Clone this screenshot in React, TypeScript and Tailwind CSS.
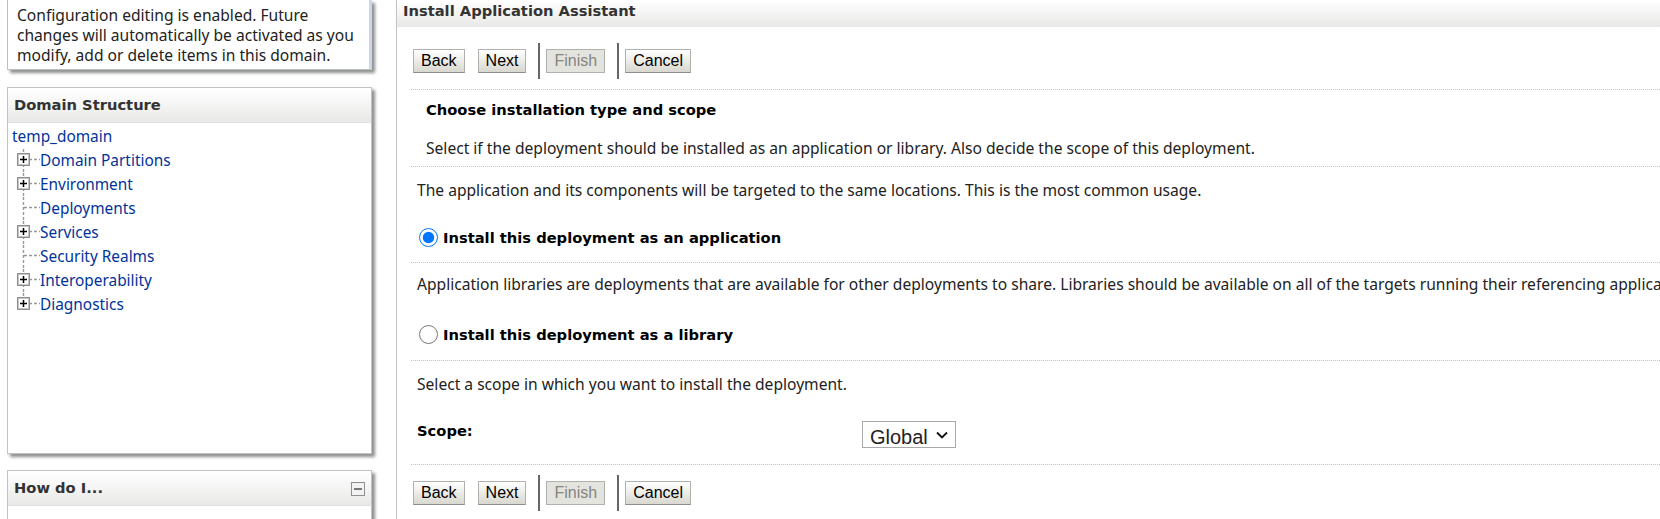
const bodyFont = "font-['Noto_Sans','DejaVu_Sans',sans-serif]";
const boldFont = "font-['DejaVu_Sans',sans-serif] font-bold";

const TREE_ITEMS = [
  { label: "Domain Partitions", expandable: true },
  { label: "Environment", expandable: true },
  { label: "Deployments", expandable: false },
  { label: "Services", expandable: true },
  { label: "Security Realms", expandable: false },
  { label: "Interoperability", expandable: true },
  { label: "Diagnostics", expandable: true },
];

function TreeConnector({ expandable, last }: { expandable: boolean; last: boolean }) {
  return (
    <svg width="23" height="24" viewBox="0 0 23 24" className="shrink-0 block">
      <line x1="6.5" y1="0" x2="6.5" y2={last ? 10 : 24} stroke="#999" strokeWidth="1.4" strokeDasharray="3 2" />
      <line x1="7" y1="10.5" x2="23" y2="10.5" stroke="#999" strokeWidth="1.4" strokeDasharray="3 2" />
      {expandable && (
        <g>
          <rect x="0.5" y="4.5" width="12" height="12" fill="#fff" stroke="#8f8f8f" />
          <rect x="1.5" y="5.5" width="10" height="10" fill="#fff" stroke="#c4c4c4" />
          <path d="M3 10.5h7M6.5 7v7" stroke="#000" strokeWidth="1.5" />
        </g>
      )}
    </svg>
  );
}

function PanelHeader({ title, collapse }: { title: string; collapse?: boolean }) {
  return (
    <div className="flex h-[34px] items-center justify-between border-b border-[#dfe1df] bg-gradient-to-b from-white to-[#e8e9e7] pl-[6px] pr-[6px]">
      <span className={"text-[14.7px] text-[#333] " + boldFont}>{title}</span>
      {collapse && (
        <span className="flex h-[14px] w-[14px] items-center justify-center border border-[#8f8f8f] bg-[#f2f2f2]">
          <span className="h-[2px] w-[8px] bg-[#777]" />
        </span>
      )}
    </div>
  );
}

function WizardButton({ label, disabled }: { label: string; disabled?: boolean }) {
  return (
    <button
      disabled={disabled}
      className={
        "h-[24px] border border-[#b0b1ac] px-[7px] font-['Liberation_Sans',sans-serif] text-[16px] leading-none " +
        (disabled
          ? "bg-[#e4e4de] text-[#85857f]"
          : "border-b-[#8d8e8a] bg-gradient-to-b from-white to-[#d8d8d0] text-black")
      }
    >
      {label}
    </button>
  );
}

function ButtonBar() {
  return (
    <div className="flex items-center">
      <WizardButton label="Back" />
      <span className="w-[13px]" />
      <WizardButton label="Next" />
      <span className="ml-[12px] mr-[6px] h-[36px] w-[2px] bg-[#666]" />
      <WizardButton label="Finish" disabled />
      <span className="ml-[12px] mr-[6px] h-[36px] w-[2px] bg-[#666]" />
      <WizardButton label="Cancel" />
    </div>
  );
}

function Dotted({ className }: { className?: string }) {
  return <div className={"border-t border-dotted border-[#c4c4c4] " + (className ?? "")} />;
}

export default function App() {
  return (
    <div className={"flex h-[519px] w-[1660px] overflow-hidden bg-white text-[15.6px] text-[#222] " + bodyFont}>
      <aside className="w-[396px] shrink-0 pl-[7px]">
        <div className="h-[70px] w-[365px] border-x border-b border-[#b9c0c4] border-r-[#c8d6ee] border-r-[3px] bg-white pl-[9px] pt-[5px] leading-[20px] shadow-[3px_3px_3px_#8f8f8f]">
          <p>Configuration editing is enabled. Future</p>
          <p>changes will automatically be activated as you</p>
          <p>modify, add or delete items in this domain.</p>
        </div>

        <div className="mt-[17px] h-[367px] w-[365px] border border-[#bfc4c7] bg-white pt-[1px] shadow-[3px_3px_3px_#8f8f8f]">
          <PanelHeader title="Domain Structure" />
          <div className="pl-[4px] pt-[2px] text-[15.4px] text-[#003399]">
            <div className="h-[24px] leading-[24px]">temp_domain</div>
            {TREE_ITEMS.map((item, i) => (
              <div key={item.label} className="flex h-[24px] items-center pl-[5px]">
                <TreeConnector expandable={item.expandable} last={i === TREE_ITEMS.length - 1} />
                <span className="leading-[24px]">{item.label}</span>
              </div>
            ))}
          </div>
        </div>

        <div className="mt-[16px] h-[80px] w-[365px] border border-[#bfc4c7] bg-white pt-[1px] shadow-[3px_3px_3px_#8f8f8f]">
          <PanelHeader title="How do I..." collapse />
        </div>
      </aside>

      <main className="min-w-0 flex-1 border-l border-[#bfc4c7]">
        <div className={"flex h-[27px] items-center bg-gradient-to-b from-white to-[#e8e9e7] pb-[4px] pl-[6px] text-[14.7px] text-[#333] " + boldFont}>
          Install Application Assistant
        </div>
        <div className="pl-[14px]">
          <div className="flex h-[62px] items-center pl-[2px] pt-[6px]">
            <ButtonBar />
          </div>
          <Dotted />
          <div className="pl-[15px]">
            <h2 className={"pt-[9px] text-[14.7px] leading-[22px] text-black " + boldFont}>Choose installation type and scope</h2>
            <p className="pt-[17px] leading-[20px] whitespace-nowrap">
              Select if the deployment should be installed as an application or library. Also decide the scope of this deployment.
            </p>
          </div>
          <Dotted className="mt-[8px]" />
          <p className="pl-[6px] pt-[13px] leading-[20px] whitespace-nowrap">
            The application and its components will be targeted to the same locations. This is the most common usage.
          </p>
          <label className={"mt-[28px] flex h-[19px] items-center pl-[8px] text-[14.7px] text-black " + boldFont}>
            <input type="radio" name="kind" defaultChecked className="m-0 h-[19px] w-[19px]" />
            <span className="ml-[5px] pt-[2px]">Install this deployment as an application</span>
          </label>
          <Dotted className="mt-[15px]" />
          <p className="pl-[6px] pt-[11px] leading-[20px] whitespace-nowrap">
            Application libraries are deployments that are available for other deployments to share. Libraries should be available on all of the targets running their referencing applications.
          </p>
          <label className={"mt-[31px] flex h-[19px] items-center pl-[8px] text-[14.7px] text-black " + boldFont}>
            <input type="radio" name="kind" className="m-0 h-[19px] w-[19px]" />
            <span className="ml-[5px] pt-[2px]">Install this deployment as a library</span>
          </label>
          <Dotted className="mt-[16px]" />
          <p className="pl-[6px] pt-[13px] leading-[20px] whitespace-nowrap">Select a scope in which you want to install the deployment.</p>
          <div className="mt-[27px] flex h-[27px] items-start pl-[6px]">
            <span className={"w-[445px] text-[14.7px] leading-[20px] text-black " + boldFont}>Scope:</span>
            <div className="relative h-[27px] w-[94px]">
              <select defaultValue="Global" className="h-[27px] w-[94px] appearance-none border border-[#a9a9a9] bg-white pl-[7px] font-['Liberation_Sans',sans-serif] text-[20px] text-[#222]">
                <option>Global</option>
              </select>
              <svg width="12" height="8" viewBox="0 0 12 8" className="pointer-events-none absolute right-[8px] top-[10px]">
                <path d="M1 1.5l5 5 5-5" fill="none" stroke="#111" strokeWidth="1.8" />
              </svg>
            </div>
          </div>
          <Dotted className="mt-[16px]" />
          <div className="flex h-[56px] items-center pl-[2px]">
            <ButtonBar />
          </div>
        </div>
      </main>
    </div>
  );
}
